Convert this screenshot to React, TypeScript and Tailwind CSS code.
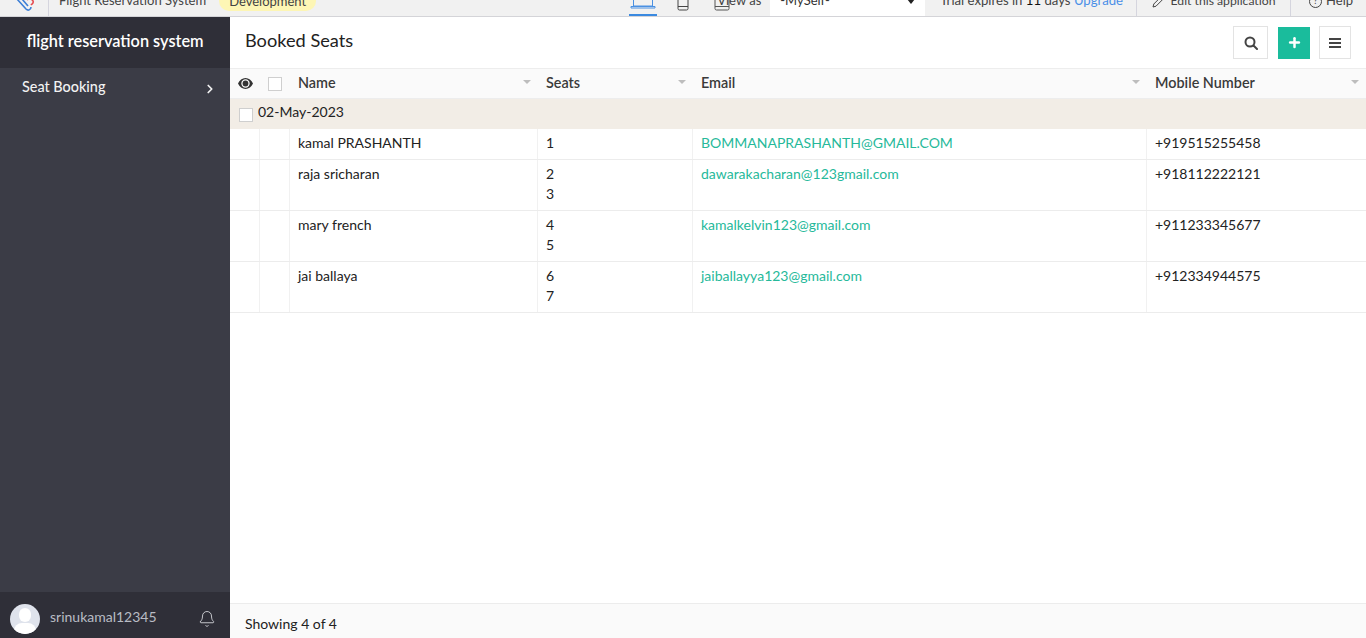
import { ChevronRight, Bell, Plus } from "lucide-react"

const rows = [
  { name: "kamal PRASHANTH", seats: ["1"], email: "BOMMANAPRASHANTH@GMAIL.COM", mobile: "+919515255458" },
  { name: "raja sricharan", seats: ["2", "3"], email: "dawarakacharan@123gmail.com", mobile: "+918112222121" },
  { name: "mary french", seats: ["4", "5"], email: "kamalkelvin123@gmail.com", mobile: "+911233345677" },
  { name: "jai ballaya", seats: ["6", "7"], email: "jaiballayya123@gmail.com", mobile: "+912334944575" },
]

const columns = [
  { label: "Name", width: "w-[248px]" },
  { label: "Seats", width: "w-[155px]" },
  { label: "Email", width: "w-[454px]" },
  { label: "Mobile Number", width: "w-[219px]" },
]

function TopBar() {
  return (
    <div className="h-[17px] shrink-0 overflow-hidden border-b border-[#d4d4d8] bg-[#f1f1f1] text-[13px] text-[#444]">
      <div className="-mt-[14px] flex h-[30px] items-center">
        <div className="flex h-full w-[49px] items-center justify-center border-r border-[#d5d5de] pl-[1px]">
          <svg width="22" height="22" viewBox="0 0 22 22" fill="none" strokeWidth="1.6" className="mt-[2px]">
            <path d="M3 8l9 10c2 2 5 1 5-2" stroke="#3d7fd6" />
            <path d="M8 8l6 7" stroke="#3d7fd6" />
            <path d="M13 9c2-2 5-1 6 1s-1 3-2 4" stroke="#e5484d" />
          </svg>
        </div>
        <span className="ml-[10px]">Flight Reservation System</span>
        <span className="ml-[13px] rounded-[10px] bg-[#fdf6b5] px-[10px] leading-[20px]">Development</span>
        <div className="ml-[313px] flex h-full w-[28px] items-center justify-center border-b-2 border-[#3b8ae0]">
          <svg width="26" height="18" viewBox="0 0 26 18" fill="none" stroke="#4a90e2" strokeWidth="1" className="mt-[1px]">
            <path d="M3.5 1h19v13h-19z" />
            <path d="M1 14.5h24v1.5H1z" />
          </svg>
        </div>
        <svg width="12" height="18" viewBox="0 0 12 18" fill="none" stroke="#444" strokeWidth="1" className="ml-[20px] mt-[2px]">
          <rect x="1" y="1" width="10" height="16" rx="1.5" />
          <path d="M1 13.5h10" />
        </svg>
        <svg width="16" height="18" viewBox="0 0 16 18" fill="none" stroke="#555" strokeWidth="1" className="ml-[25px] mt-[2px]">
          <rect x="1" y="1" width="14" height="16" rx="1.5" />
          <path d="M1 13.5h14" />
        </svg>
        <span className="-ml-[13px]">View as</span>
        <div className="ml-[9px] flex h-full w-[155px] items-center justify-between bg-white pl-[10px] pr-[10px] text-[#333]">
          <span>-MySelf-</span>
          <span className="h-0 w-0 border-x-[4px] border-t-[5px] border-x-transparent border-t-[#222]" />
        </div>
        <span className="ml-[15px] text-[13.15px]">
          Trial expires in <span className="text-[#111]">11</span> days <span className="text-[#4a8fe7]">Upgrade</span>
        </span>
        <div className="ml-[13px] flex h-full w-[155px] items-center justify-center gap-[6px] border-x border-[#d5d5de] text-[12.2px]">
          <svg width="13" height="13" viewBox="0 0 13 13" fill="none" stroke="#444" strokeWidth="1">
            <path d="M1 12l.8-3L9.500 1.300l2.200 2.200L4 11.200z" />
          </svg>
          <span>Edit this application</span>
        </div>
        <div className="flex items-center gap-[4px] pl-[18px]">
          <span className="flex h-[13px] w-[13px] items-center justify-center rounded-full border border-[#444] text-[9px]">?</span>
          <span>Help</span>
        </div>
      </div>
    </div>
  )
}

function Sidebar() {
  return (
    <aside className="flex w-[230px] shrink-0 flex-col bg-[#3b3c46]">
      <div className="flex h-[51px] shrink-0 items-center justify-center bg-[#2f2f38] pb-[2px] text-[16.3px] font-semibold text-white">
        flight reservation system
      </div>
      <div className="flex h-[38px] items-center justify-between pl-[22px] pr-[13px] text-[14.4px] font-medium text-[#f2f2f2]">
        <span>Seat Booking</span>
        <ChevronRight size={14} strokeWidth={3} className="mt-[3px]" />
      </div>
      <div className="mt-auto flex h-[46px] items-center bg-[#2f2f38] pl-[10px] pr-[14px] pt-[7px]">
        <div className="relative h-[30px] w-[30px] overflow-hidden rounded-full bg-[#dfe3ec]">
          <span className="absolute left-[9px] top-[4px] h-[14px] w-[12px] rounded-full bg-white" />
          <span className="absolute left-[4px] top-[19px] h-[16px] w-[22px] rounded-full bg-white" />
        </div>
        <span className="-mt-[4px] ml-[10px] text-[14px] text-[#b9bcc4]">srinukamal12345</span>
        <Bell size={18} strokeWidth={1.2} className="ml-auto text-[#d5d6da]" />
      </div>
    </aside>
  )
}

function Checkbox({ className }: { className: string }) {
  return <span className={"block h-[14px] w-[14px] border border-[#cfcfcf] bg-white " + className} />
}

function BookedTable() {
  return (
    <div className="text-[14px] text-[#222]">
      <div className="flex h-[31px] border-y border-[#ededed] bg-[#fafafa] text-[14.4px] font-semibold text-[#3a3a3a]">
        <div className="flex w-[30px] items-center justify-center">
          <svg width="15" height="11" viewBox="0 0 15 11" className="text-[#333]">
            <path
              fill="currentColor"
              fillRule="evenodd"
              d="M7.5 0C4.2 0 1.5 2.2 0 5.5 1.5 8.8 4.2 11 7.5 11s6-2.2 7.5-5.5C13.500 2.200 10.800 0 7.500 0zM7.500 1.300a4.200 4.200 0 1 1 0 8.400 4.200 4.200 0 0 1 0-8.400z"
            />
            <circle cx="7.5" cy="5.5" r="2.9" fill="currentColor" />
          </svg>
        </div>
        <div className="flex w-[30px] items-center justify-center">
          <Checkbox className="" />
        </div>
        {columns.map(col => (
          <div key={col.label} className={"flex items-center justify-between pb-[1px] pl-[8px] pr-[7px] " + col.width}>
            <span>{col.label}</span>
            <span className="-mt-[3px] h-0 w-0 border-x-[4px] border-t-[4px] border-x-transparent border-t-[#bdbdbd]" />
          </div>
        ))}
      </div>
      <div className="flex h-[30px] items-center bg-[#f2ede6] pl-[9px]">
        <Checkbox className="mt-[2px]" />
        <span className="-mt-[5px] ml-[5px]">02-May-2023</span>
      </div>
      {rows.map(row => (
        <div key={row.name} className="flex border-b border-[#ececec] leading-[20px]">
          <div className="w-[30px] border-r border-[#f1f1f1]" />
          <div className="w-[30px] border-r border-[#f1f1f1]" />
          <div className="w-[248px] border-r border-[#f1f1f1] px-[8px] pb-[6px] pt-[4px]">{row.name}</div>
          <div className="w-[155px] border-r border-[#f1f1f1] px-[8px] pb-[6px] pt-[4px]">
            {row.seats.map(seat => (
              <div key={seat}>{seat}</div>
            ))}
          </div>
          <div className="w-[454px] border-r border-[#f1f1f1] px-[8px] pb-[6px] pt-[4px] text-[#26b99a]">{row.email}</div>
          <div className="w-[219px] px-[8px] pb-[6px] pt-[4px]">{row.mobile}</div>
        </div>
      ))}
    </div>
  )
}

export default function App() {
  return (
    <div className="flex h-[638px] flex-col overflow-hidden bg-white font-['Lato',sans-serif]">
      <TopBar />
      <div className="flex min-h-0 flex-1">
        <Sidebar />
        <main className="flex min-w-0 flex-1 flex-col">
          <div className="flex h-[51px] shrink-0 items-center justify-between pl-[15px] pr-[15px]">
            <h1 className="-mt-[3px] text-[18.2px] text-[#222]">Booked Seats</h1>
            <div className="flex items-center">
              <button className="flex h-[33px] w-[35px] items-center justify-center border border-[#e3e3e3] text-[#444]">
                <svg width="14" height="14" viewBox="0 0 14 14" fill="none" stroke="currentColor" strokeWidth="2">
                  <circle cx="6" cy="6" r="4.500" />
                  <path d="M9.500 9.500L13 13" strokeLinecap="round" />
                </svg>
              </button>
              <button className="ml-[10px] flex h-[32px] w-[32px] items-center justify-center bg-[#1abc9c] text-white">
                <Plus size={15} strokeWidth={4} />
              </button>
              <button className="ml-[9px] flex h-[33px] w-[32px] flex-col items-center justify-center gap-[2px] border border-[#e3e3e3]">
                <span className="h-[2px] w-[12px] bg-[#444]" />
                <span className="h-[2px] w-[12px] bg-[#444]" />
                <span className="h-[2px] w-[12px] bg-[#444]" />
              </button>
            </div>
          </div>
          <BookedTable />
          <div className="mt-auto flex h-[35px] shrink-0 items-center border-t border-[#ececec] bg-[#fafafa] pl-[15px] pt-[4px] text-[14px] text-[#222]">
            Showing 4 of 4
          </div>
        </main>
      </div>
    </div>
  )
}
